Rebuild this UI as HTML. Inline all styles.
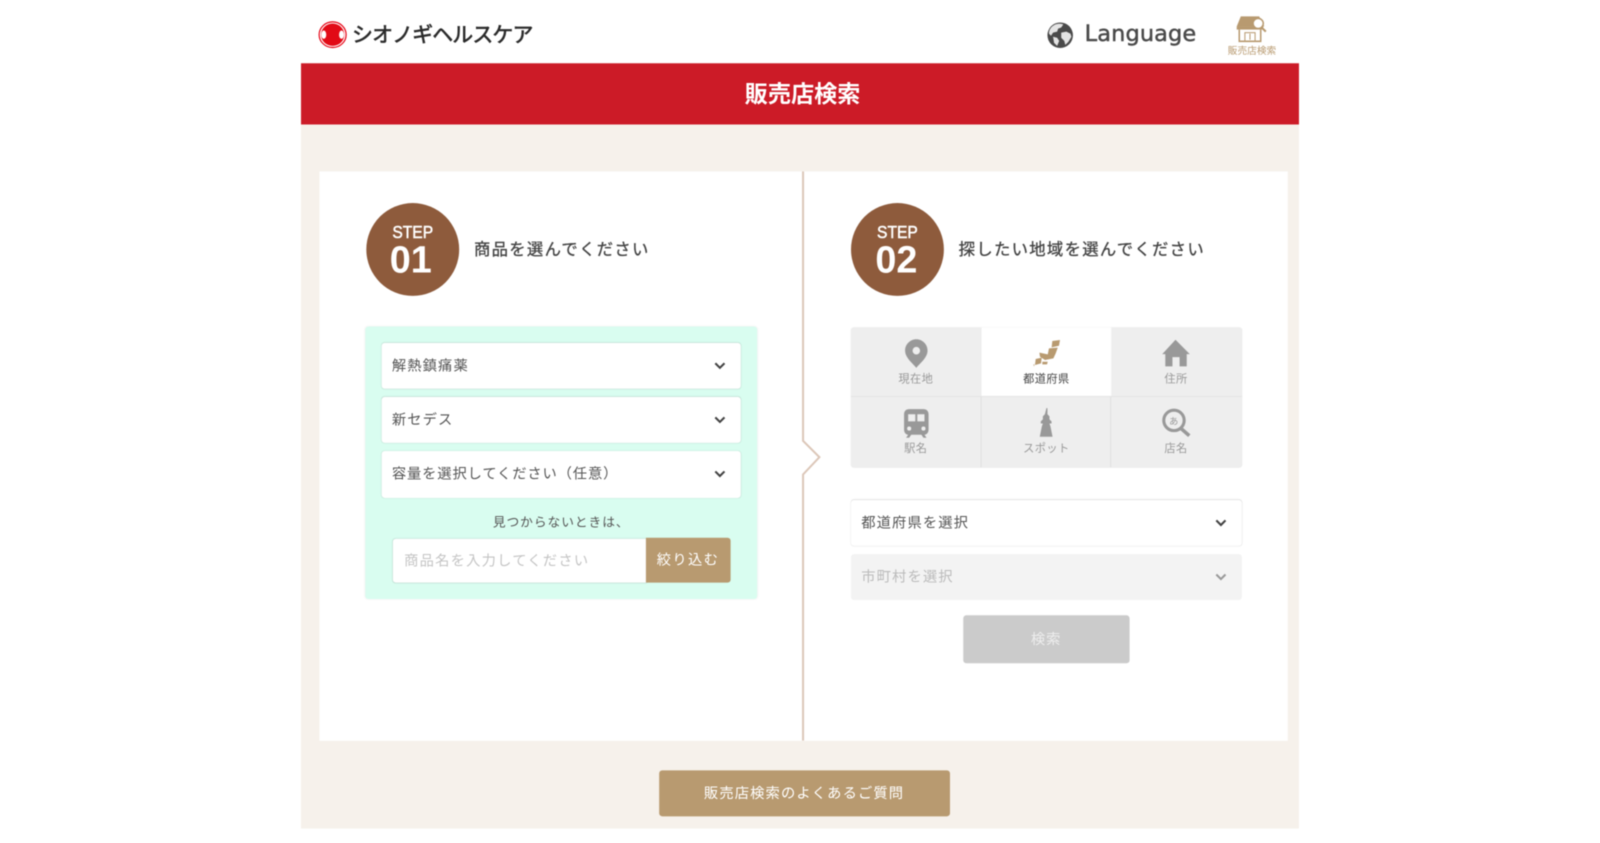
<!DOCTYPE html>
<html lang="ja">
<head>
<meta charset="utf-8">
<title>販売店検索</title>
<style>
html,body{margin:0;padding:0;background:#fff;}
body{width:1600px;height:842px;overflow:hidden;position:relative;font-family:"Liberation Sans","Noto Sans CJK JP",sans-serif;color:#444;}
#w{position:absolute;left:0;top:0;width:1568px;height:826px;transform:scale(1.0204);transform-origin:0 0;filter:blur(.45px);}
.a{position:absolute;box-sizing:border-box;white-space:nowrap;}
.sel{background:#fff;border-radius:3px;box-shadow:0 0 1.200px rgba(0,0,0,.2);font-size:14px;letter-spacing:1.1px;padding-left:10px;color:#555;}
.chev{position:absolute;}
.tab{position:absolute;width:127px;height:69px;font-size:11px;text-align:center;color:#999;letter-spacing:.4px;}
.tab span{position:absolute;left:0;right:0;top:45px;line-height:14px;}
.tab svg{position:absolute;left:0;top:0;}
.step{position:absolute;width:91px;height:91px;border-radius:50%;background:#8e5b3c;color:#fff;text-align:center;}
.step b{position:absolute;left:0;right:0;font-weight:700;}
</style>
</head>
<body>
<div id="w">
<!-- header -->
<svg class="a" style="left:312px;top:20px" width="28" height="28" viewBox="0 0 29 28">
<ellipse cx="14.500" cy="14" rx="13.700" ry="13" fill="#fff" stroke="#e60012" stroke-width="1.200"/>
<ellipse cx="14.500" cy="14" rx="11.800" ry="11.300" fill="#e20a16"/>
<ellipse cx="5.500" cy="14" rx="2.500" ry="4.200" fill="#fff"/>
<ellipse cx="23.500" cy="14" rx="2.500" ry="4.200" fill="#fff"/>
</svg>
<div class="a" style="left:345px;top:21.500px;font-size:20.500px;line-height:26px;color:#2b2b2b;-webkit-text-stroke:.6px #2b2b2b;letter-spacing:-.85px;">シオノギヘルスケア</div>
<svg class="a" style="left:1026px;top:21px" width="26" height="27" viewBox="0 0 26 27">
<circle cx="13" cy="13.500" r="12.500" fill="#4a4a4a"/>
<path d="M8 3c3-1 6-1 8 0l-2 3-3 1-1 3-4 1-2 3-2-2C2 8 4 5 8 3zM14 11l5-1 4 2 1 3-3 5-3 3-1-4-3-3zM6 15l4 1 2 3-2 5-3-3z" fill="#e4e4e4"/>
</svg>
<div class="a" style="left:1063px;top:19px;line-height:30px;color:#4a4a4a;font-family:'DejaVu Sans','Liberation Sans',sans-serif;font-size:22px;letter-spacing:.1px;-webkit-text-stroke:.45px #4a4a4a;">Language</div>
<svg class="a" style="left:1211px;top:15px" width="32" height="28" viewBox="0 0 32 28">
<path d="M5 1h18l5 10H1z" fill="#b89a70"/>
<rect x="1" y="11" width="26" height="3" fill="#b89a70"/>
<path d="M3.500 14v11.500h21V14" fill="none" stroke="#b89a70" stroke-width="1.500"/>
<rect x="9" y="17" width="10" height="8.500" fill="none" stroke="#b89a70"/>
<path d="M14 18v6" stroke="#b89a70"/>
<circle cx="22" cy="8" r="5" fill="#fff" stroke="#b89a70" stroke-width="1.500"/>
<path d="M25.500 12l4 4" stroke="#b89a70" stroke-width="2"/>
</svg>
<div class="a" style="left:1202px;top:45px;width:50px;text-align:center;font-size:9.500px;line-height:12px;color:#b89a70;">販売店検索</div>

<!-- band and background -->
<div class="a" style="left:295px;top:122px;width:978px;height:690px;background:#f6f1eb"></div>
<div class="a" style="left:295px;top:62px;width:978px;height:60px;background:#cc1b27;color:#fff;font-size:22.700px;font-weight:700;text-align:center;line-height:61.500px;padding-left:5px;">販売店検索</div>
<div class="a" style="left:313px;top:168px;width:949px;height:558px;background:#fff"></div>

<!-- divider -->
<svg class="a" style="left:780px;top:168px" width="30" height="558" viewBox="0 0 30 558">
<path d="M7 0V264L23 280 7 297V558" fill="none" stroke="#dcc7b9" stroke-width="2"/>
</svg>

<!-- steps -->
<div class="step" style="left:358.500px;top:199px">
<b style="top:19px;font-size:17px;line-height:20px;font-weight:400;-webkit-text-stroke:.5px #fff;transform:scaleX(.9);">STEP</b>
<b style="top:35px;font-size:37px;line-height:42px;left:-3px;">01</b>
</div>
<div class="a" style="left:464.500px;top:234px;font-size:16px;line-height:24px;letter-spacing:1.300px;color:#444;-webkit-text-stroke:.3px #444;">商品を選んでください</div>
<div class="step" style="left:833.500px;top:199px">
<b style="top:19px;font-size:17px;line-height:20px;font-weight:400;-webkit-text-stroke:.5px #fff;transform:scaleX(.9);">STEP</b>
<b style="top:35px;font-size:37px;line-height:42px;left:-1px;">02</b>
</div>
<div class="a" style="left:939.500px;top:234px;font-size:16px;line-height:24px;letter-spacing:1.300px;color:#444;-webkit-text-stroke:.3px #444;">探したい地域を選んでください</div>

<!-- left panel -->
<div class="a" style="left:358px;top:320px;width:384px;height:267px;background:#d9fdf0;border-radius:3px;box-shadow:0 0 2px rgba(0,0,0,.08)"></div>
<div class="a sel" style="left:374px;top:336px;width:352px;height:45px;line-height:44px;">解熱鎮痛薬
<svg class="chev" style="right:14px;top:17.500px" width="13" height="10" viewBox="0 0 13 10"><path d="M2 2l4.500 4.500L11 2" fill="none" stroke="#444" stroke-width="2"/></svg></div>
<div class="a sel" style="left:374px;top:389px;width:352px;height:45px;line-height:44px;">新セデス
<svg class="chev" style="right:14px;top:18px" width="13" height="10" viewBox="0 0 13 10"><path d="M2 2l4.500 4.500L11 2" fill="none" stroke="#444" stroke-width="2"/></svg></div>
<div class="a sel" style="left:374px;top:442px;width:352px;height:46px;line-height:45px;letter-spacing:.85px;">容量を選択してください（任意）
<svg class="chev" style="right:14px;top:18px" width="13" height="10" viewBox="0 0 13 10"><path d="M2 2l4.500 4.500L11 2" fill="none" stroke="#444" stroke-width="2"/></svg></div>
<div class="a" style="left:358px;top:502.500px;width:384px;text-align:center;font-size:12.500px;line-height:18px;letter-spacing:.9px;color:#555;">見つからないときは、</div>
<div class="a" style="left:385px;top:527.500px;width:249px;height:43.500px;background:#fff;border-radius:3px 0 0 3px;box-shadow:0 0 1.200px rgba(0,0,0,.2);font-size:14px;line-height:42.500px;padding-left:11px;letter-spacing:1.200px;color:#c4c4c4;">商品名を入力してください</div>
<div class="a" style="left:633px;top:527px;width:82.500px;height:44px;background:#b89a70;border-radius:0 3px 3px 0;color:#fff;text-align:center;font-size:14px;line-height:43.500px;letter-spacing:1.300px;">絞り込む</div>

<!-- tabs -->
<div class="a" style="left:833.500px;top:320.500px;width:383px;height:137.500px;background:#eee;border-radius:3px;box-shadow:0 0 1px rgba(0,0,0,.15)"></div>
<div class="a" style="left:962px;top:321px;width:127px;height:68px;background:#fff"></div>
<div class="a" style="left:833.500px;top:388px;width:383px;height:1px;background:#e3e3e3"></div>
<div class="a" style="left:961px;top:389px;width:1px;height:69px;background:#e0e0e0"></div>
<div class="a" style="left:1088px;top:389px;width:1px;height:69px;background:#e0e0e0"></div>

<div class="tab" style="left:834px;top:320px"><svg width="127" height="43" viewBox="0 0 127 43"><path fill-rule="evenodd" d="M64 12.500c6 0 11 5 11 11 0 7-7 12-11 17-4-5-11-10-11-17 0-6 5-11 11-11zm0 7.500a3.700 3.700 0 1 0 0 7.400 3.700 3.700 0 0 0 0-7.400z" fill="#999"/></svg><span>現在地</span></div>
<div class="tab" style="left:962px;top:320px;color:#444"><svg width="127" height="43" viewBox="0 0 127 43"><path d="M69.300 14.200L76.800 13.200 75.800 18.800 68.600 20.400zM66 21.400L74.600 20.700 72.600 26.300 70.300 31.200 62.100 32.800 57.200 29.600 56.600 25.600 64.800 27.300zM53 31.800L58.900 30.500 58.200 36.100 52.300 37.700zM59.500 34.500H64.800L64.100 37.100H59.500zM50.700 37.100H51.700L51.400 39.400z" fill="#b89a70"/></svg><span>都道府県</span></div>
<div class="tab" style="left:1089px;top:320px"><svg width="127" height="43" viewBox="0 0 127 43"><path d="M63 13L77 27h-3v12h-7v-9h-7v9h-7V27h-3z" fill="#999"/></svg><span>住所</span></div>
<div class="tab" style="left:834px;top:389px"><svg width="127" height="43" viewBox="0 0 127 43"><path fill-rule="evenodd" d="M57 12h14c3 0 5 2 5 5v15c0 3-2 5-4 5l2 3h-3l-2-3H59l-2 3h-3l2-3c-2 0-4-2-4-5V17c0-3 2-5 5-5zm-1 5v7h7v-7zm9 0v7h7v-7zM57 29a2 2 0 1 0 0 4 2 2 0 0 0 0-4zm14 0a2 2 0 1 0 0 4 2 2 0 0 0 0-4z" fill="#999"/></svg><span style="top:44px">駅名</span></div>
<div class="tab" style="left:962px;top:389px"><svg width="127" height="43" viewBox="0 0 127 43"><path d="M63.500 11h1v6l2 2v3l2 2v2h-2l1 3 2 10H57l2-10 1-3h-2v-2l2-2v-3l2-2z" fill="#999"/></svg><span style="top:44px">スポット</span></div>
<div class="tab" style="left:1089px;top:389px"><svg width="127" height="43" viewBox="0 0 127 43"><circle cx="61.500" cy="23" r="10" fill="none" stroke="#999" stroke-width="3"/><path d="M68.500 31l8 7" stroke="#999" stroke-width="3.500"/><text x="61.500" y="27" font-size="9" text-anchor="middle" fill="#999" font-family="'Noto Sans CJK JP',sans-serif">あ</text></svg><span style="top:44px">店名</span></div>

<!-- right selects -->
<div class="a sel" style="left:833.500px;top:490px;width:383px;height:45px;line-height:44px;color:#555;padding-left:10.500px;">都道府県を選択
<svg class="chev" style="right:14px;top:17.500px" width="13" height="10" viewBox="0 0 13 10"><path d="M2 2l4.500 4.500L11 2" fill="none" stroke="#444" stroke-width="2"/></svg></div>
<div class="a" style="left:833.500px;top:543px;width:383px;height:45px;line-height:45px;background:#f3f3f3;border-radius:3px;font-size:14px;letter-spacing:1.100px;padding-left:10.500px;color:#bbb;">市町村を選択
<svg class="chev" style="right:14px;top:18px" width="13" height="10" viewBox="0 0 13 10"><path d="M2 2l4.500 4.500L11 2" fill="none" stroke="#999" stroke-width="2"/></svg></div>
<div class="a" style="left:943.500px;top:603px;width:163.500px;height:47px;background:#cbcbcb;border-radius:3px;color:#eee;text-align:center;font-size:14px;line-height:46px;letter-spacing:1px;">検索</div>

<!-- faq -->
<div class="a" style="left:645.500px;top:754.500px;width:285px;height:45.500px;background:#b89a70;border-radius:3px;color:#fff;text-align:center;font-size:14px;line-height:44px;letter-spacing:1.100px;">販売店検索のよくあるご質問</div>
</div>
</body>
</html>
